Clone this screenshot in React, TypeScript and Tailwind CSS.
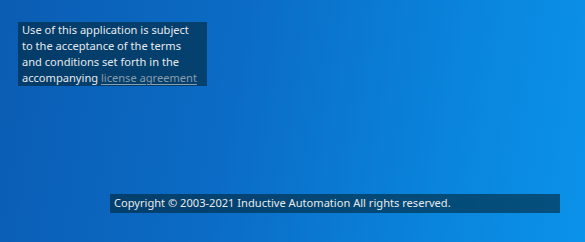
export default function App() {
  return (
    <div
      className="w-[585px] h-[242px] overflow-hidden flex flex-col bg-[linear-gradient(100deg,#0b5cb2_0%,#0b6cc6_40%,#0a84dc_75%,#0b92ea_100%)] text-[#e6e9ec]"
      style={{ fontFamily: '"Noto Sans", "Open Sans", sans-serif' }}
    >
      <div className="mt-[22px] ml-[18px] w-[189px] px-1 bg-[rgba(0,40,60,0.62)] text-[11.1px] leading-4 whitespace-nowrap">
        Use of this application is subject
        <br />
        to the acceptance of the terms
        <br />
        and conditions set forth in the
        <br />
        accompanying <a className="text-[#8b9cab] underline underline-offset-2">license agreement</a>
      </div>
      <div className="flex-1" />
      <div className="ml-[110px] mb-[29px] w-[450px] h-[19px] px-1 flex items-center bg-[rgba(0,40,60,0.62)] text-[11.1px] whitespace-nowrap">
        Copyright © 2003-2021 Inductive Automation All rights reserved.
      </div>
    </div>
  );
}
